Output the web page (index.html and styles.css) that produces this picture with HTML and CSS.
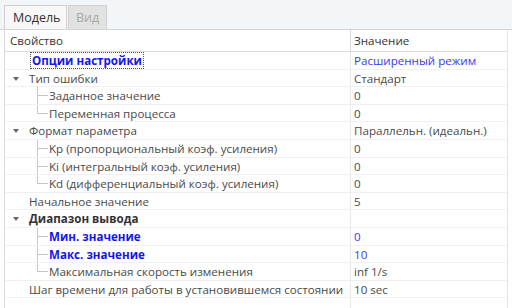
FILE: index.html
```html
<!DOCTYPE html>
<html lang="ru">
<head>
    <meta charset="UTF-8">
    <title>Свойства</title>
    <link rel="stylesheet" href="styles.css">
</head>
<body>
    <div class="tabbar">
        <div class="tab active">Модель</div>
        <div class="tab disabled">Вид</div>
    </div>

    <div class="grid">
        <div class="row head">
            <div class="name">Свойство</div>
            <div class="value">Значение</div>
        </div>

        <div class="row">
            <div class="name lvl0"><span class="focus bold-blue">Опции настройки</span></div>
            <div class="value blue">Расширенный режим</div>
        </div>
        <div class="row">
            <div class="name lvl0"><span class="arrow"></span>Тип ошибки</div>
            <div class="value">Стандарт</div>
        </div>
        <div class="row">
            <div class="name lvl1"><span class="branch"></span>Заданное значение</div>
            <div class="value">0</div>
        </div>
        <div class="row">
            <div class="name lvl1"><span class="branch last"></span>Переменная процесса</div>
            <div class="value">0</div>
        </div>
        <div class="row">
            <div class="name lvl0"><span class="arrow"></span>Формат параметра</div>
            <div class="value">Параллельн. (идеальн.)</div>
        </div>
        <div class="row">
            <div class="name lvl1"><span class="branch"></span>Kp (пропорциональный коэф. усиления)</div>
            <div class="value">0</div>
        </div>
        <div class="row">
            <div class="name lvl1"><span class="branch"></span>Ki (интегральный коэф. усиления)</div>
            <div class="value">0</div>
        </div>
        <div class="row">
            <div class="name lvl1"><span class="branch last"></span>Kd (дифференциальный коэф. усиления)</div>
            <div class="value">0</div>
        </div>
        <div class="row">
            <div class="name lvl0">Начальное значение</div>
            <div class="value">5</div>
        </div>
        <div class="row">
            <div class="name lvl0 bold"><span class="arrow"></span>Диапазон вывода</div>
            <div class="value"></div>
        </div>
        <div class="row">
            <div class="name lvl1 bold-blue"><span class="branch"></span>Мин. значение</div>
            <div class="value blue">0</div>
        </div>
        <div class="row">
            <div class="name lvl1 bold-blue"><span class="branch"></span>Макс. значение</div>
            <div class="value blue">10</div>
        </div>
        <div class="row">
            <div class="name lvl1"><span class="branch last"></span>Максимальная скорость изменения</div>
            <div class="value">inf 1/s</div>
        </div>
        <div class="row">
            <div class="name lvl0">Шаг времени для работы в установившемся состоянии</div>
            <div class="value">10 sec</div>
        </div>
        <div class="row empty">
            <div class="name"></div>
            <div class="value"></div>
        </div>
    </div>
</body>
</html>
```

FILE: styles.css
```css
body {
    margin: 0;
    background: #fff;
    font-family: "Open Sans", "Noto Sans", sans-serif;
    font-size: 11.6px;
    color: #4a4a4a;
    overflow: hidden;
}

.tabbar {
    height: 29px;
    background: #f3f6f8;
    border-bottom: 1px solid #d4d4d4;
    display: flex;
    align-items: flex-end;
    padding-left: 4px;
}

.tab {
    height: 24px;
    line-height: 24px;
    padding: 0 8px;
    border: 1px solid #d0d0d0;
    border-bottom: none;
    box-sizing: border-box;
}

.tab.active {
    background: #f8f8f8;
    color: #333;
    width: 63px;
    font-size: 12.5px;
}

.tab.disabled {
    background: #e2e2e2;
    color: #a8a8a8;
    width: 39px;
    margin-left: 1px;
    text-align: center;
    padding: 0;
    font-size: 12.5px;
}

.grid {
    margin-left: 4px;
    width: 502px;
    border-left: 1px solid #dcdcdc;
    border-right: 1px solid #e4e4e4;
}

.row {
    display: flex;
    height: 17.6px;
    line-height: 17px;
    border-bottom: 1px solid #f0f0f0;
    box-sizing: border-box;
    position: relative;
}

.row.head {
    height: 22px;
    line-height: 22px;
    border-bottom: 1px solid #dadada;
    color: #333;
}

.row.head .name {
    padding-left: 5px;
}

.row.empty {
    border-bottom: none;
}

.name {
    width: 345px;
    flex: none;
    white-space: nowrap;
    overflow: hidden;
    position: relative;
    box-sizing: border-box;
}

.value {
    flex: 1;
    padding-left: 3px;
    border-left: 1px solid #e8e8e8;
    white-space: nowrap;
}

.row.head .value {
    border-left-color: #d8d8d8;
}

.lvl0 {
    padding-left: 24px;
}

.lvl1 {
    padding-left: 44px;
}

.bold {
    font-weight: 700;
    color: #333;
}

.bold-blue {
    font-weight: 700;
    color: #1414f0;
}

.blue {
    color: #3a3af0;
}

.focus {
    margin-left: 2px;
    padding: 0 1px;
    outline: 1px dotted #555;
    outline-offset: 0;
}

.arrow {
    position: absolute;
    left: 8px;
    top: 7px;
    border-left: 3.5px solid transparent;
    border-right: 3.5px solid transparent;
    border-top: 4px solid #666;
}

.branch {
    position: absolute;
    left: 32px;
    top: -1px;
    width: 10px;
    height: 19px;
    border-left: 1px solid #c8c8c8;
}

.branch::after {
    content: "";
    position: absolute;
    left: 0;
    top: 9px;
    width: 10px;
    border-top: 1px solid #c8c8c8;
}

.branch.last {
    height: 10px;
}
```
